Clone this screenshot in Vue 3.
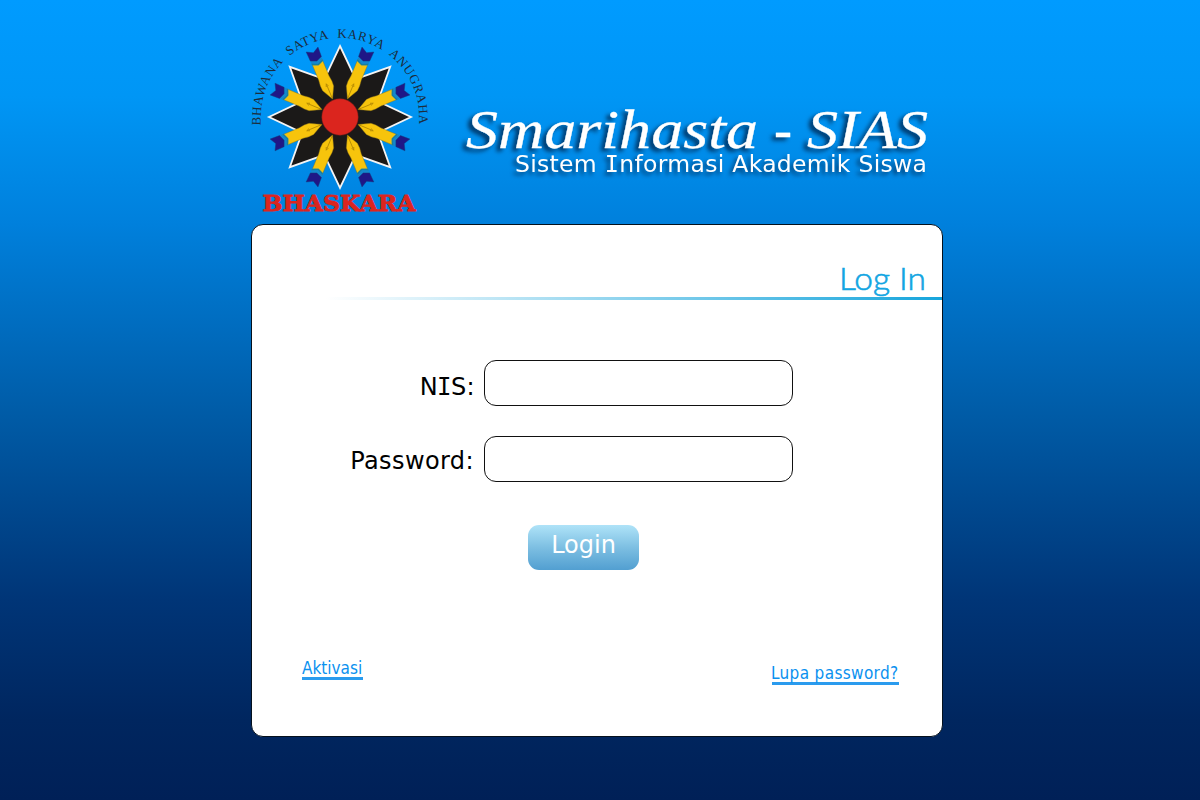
<script setup>
import { ref } from 'vue'

const nis = ref('')
const password = ref('')
const pens = [22.5, 67.5, 112.5, 157.5, 202.5, 247.5, 292.5, 337.5]

const star = Array.from({ length: 16 }, (_, i) => {
  const r = i % 2 ? 41 : 71
  const a = (i * Math.PI) / 8
  return `${(r * Math.sin(a)).toFixed(2)},${(-r * Math.cos(a)).toFixed(2)}`
}).join(' ')
</script>

<template>
  <div class="page">
    <header class="header">
      <svg class="emblem" viewBox="-100 -97 200 205" width="200" height="205">
        <defs>
          <path id="motto-arc" d="M-79.5 8.5 L-79.2 0 A79 79 0 0 1 79.2 0 L79.5 9.5" />
        </defs>
        <text class="motto"><textPath href="#motto-arc" textLength="264" lengthAdjust="spacing">BHAWANA&nbsp; SATYA&nbsp; KARYA&nbsp; ANUGRAHA</textPath></text>
        <polygon class="star" :points="star" />
        <g v-for="angle in pens" :key="angle" :transform="`rotate(${angle})`">
          <path class="barrel" d="M0 -19.5 L-6 -31 Q-6.8 -36 -5.6 -42 L-5.6 -60 L5.6 -60 L5.6 -42 Q6.8 -36 6 -31 Z" />
          <path class="slit" d="M0 -20 L0 -34 M-1.2 -33 L0 -36 L1.2 -33" />
          <path class="band" d="M-5.8 -58.5 L0 -56 L5.8 -58.5 L6 -66 L-6 -66 Z" />
          <path class="band-dark" d="M-5.8 -58.5 L0 -56 L5.8 -58.5 L5.8 -60 L0 -57.5 L-5.8 -60 Z" />
          <path class="tail" d="M-6 -63 L0 -60.5 L6 -63 L6.4 -73 L0 -69.5 L-6.4 -73 Z" />
        </g>
        <circle class="core" r="18.2" />
        <text class="school" x="-77.5" y="94.2" textLength="153" lengthAdjust="spacingAndGlyphs">BHASKARA</text>
      </svg>

      <svg class="titles" viewBox="450 95 490 90" width="490" height="90">
        <g class="title">
          <text x="466" y="148" textLength="292" lengthAdjust="spacingAndGlyphs">Smarihasta</text>
          <text x="774" y="148" textLength="18" lengthAdjust="spacingAndGlyphs">-</text>
          <text x="807" y="148" textLength="121" lengthAdjust="spacingAndGlyphs">SIAS</text>
        </g>
        <text class="subtitle" x="515" y="172" textLength="412">Sistem <tspan class="slab">I</tspan>nformasi Akademik Siswa</text>
      </svg>
    </header>

    <form class="card" @submit.prevent>
      <h1 class="heading">
        <svg width="92" height="36" viewBox="0 0 92 36"><text x="2" y="29" textLength="87" lengthAdjust="spacingAndGlyphs">Log In</text></svg>
      </h1>
      <div class="rule"></div>
      <div class="fields">
        <label class="nis" for="nis">N<span class="slab">I</span>S:</label>
        <input id="nis" v-model="nis" type="text" />
        <label for="password">Password:</label>
        <input id="password" v-model="password" type="password" />
      </div>
      <button class="submit" type="submit">Login</button>
      <nav class="links">
        <a class="link activate">Aktivasi</a>
        <a class="link forgot">Lupa password?</a>
      </nav>
    </form>
  </div>
</template>

<style>
body {
  margin: 0;
}
</style>

<style scoped>
.page {
  box-sizing: border-box;
  width: 1200px;
  height: 800px;
  padding-left: 251px;
  overflow: hidden;
  background: linear-gradient(#009bff 0%, #0096f5 12%, #0080dc 28%, #005ba6 52%, #003577 75%, #00265f 90%, #002057 100%);
  font-family: "DejaVu Sans", Verdana, sans-serif;
}
.header {
  display: flex;
  height: 224px;
}
.emblem {
  flex: none;
  margin: 19.5px 0 0 -11.3px;
}
.titles {
  flex: none;
  margin: 95px 0 0 10.3px;
  overflow: visible;
}
.motto {
  font: 13px "Liberation Serif", serif;
  fill: #1c2c3c;
}
.star {
  fill: #1b1918;
  stroke: #f4f4f4;
  stroke-width: 1.8;
}
.barrel {
  fill: #f7c40c;
  stroke: #8b7416;
  stroke-width: 0.4;
}
.slit {
  fill: none;
  stroke: #9b7400;
  stroke-width: 0.6;
}
.band {
  fill: #1487cf;
}
.band-dark {
  fill: #1a7f9c;
}
.tail {
  fill: #1f1787;
  stroke: #123c78;
  stroke-width: 0.4;
}
.core {
  fill: #db251e;
  stroke: #8a1d16;
  stroke-width: 0.5;
}
.school {
  font: bold 22.5px "DejaVu Serif", serif;
  fill: #db251e;
  stroke: #db251e;
  stroke-width: 0.9;
}
.title {
  font: italic 54px "Liberation Serif", serif;
  fill: #fff;
  stroke: #fff;
  stroke-width: 0.3;
  filter: drop-shadow(-4px 3px 2px rgba(0, 25, 60, 0.75));
}
.subtitle {
  font-size: 23.5px;
  fill: #fff;
  filter: drop-shadow(-3px 3px 2px rgba(0, 25, 60, 0.7));
}
.slab {
  font-family: "DejaVu Sans Mono", monospace;
}
.card {
  box-sizing: border-box;
  display: flex;
  flex-direction: column;
  width: 692px;
  height: 513px;
  border: 1px solid #05111d;
  border-radius: 12px;
  background: #fff;
}
.heading {
  display: flex;
  justify-content: flex-end;
  height: 36px;
  margin: 36px 13px 0 0;
  font: 300 31px/36px Lato, sans-serif;
}
.heading svg {
  overflow: visible;
}
.heading text {
  fill: #12a5e2;
  stroke: #12a5e2;
  stroke-width: 0.6;
}
.rule {
  height: 3px;
  margin: 0 0 60px 74px;
  background: linear-gradient(90deg, #fff, #16a5dc);
}
.fields {
  display: grid;
  grid-template-columns: 222px 309px;
  column-gap: 10px;
  row-gap: 30px;
}
.fields label {
  height: 46px;
  box-sizing: border-box;
  padding-top: 5px;
  font-size: 24px;
  line-height: 41px;
  letter-spacing: 0.4px;
  text-align: right;
}
.fields .nis {
  padding-top: 7px;
  margin-right: -1px;
}
.nis .slab {
  margin: 0 -1px;
}
.fields input {
  box-sizing: border-box;
  width: 309px;
  height: 46px;
  padding: 0 12px;
  border: 1px solid #111;
  border-radius: 12px;
  outline: none;
  background: #fff;
  font: 24px "DejaVu Sans", sans-serif;
}
.submit {
  width: 111px;
  height: 45px;
  margin: 43px 0 0 276px;
  padding: 0 0 5px;
  border: 0;
  border-radius: 11px;
  background: linear-gradient(#afe3f8, #7dbfe2 50%, #529fd1);
  color: #fff;
  font: 24px/40px "DejaVu Sans", sans-serif;
}
.links {
  display: flex;
  justify-content: space-between;
  align-items: flex-start;
  padding: 89px 43px 0 50px;
}
.link {
  height: 18px;
  border-bottom: 3px solid #2a9bee;
  color: #0b91ef;
  font: 17px/19px "DejaVu Sans Condensed", "DejaVu Sans", sans-serif;
  white-space: nowrap;
}
.activate {
  width: 61px;
}
.forgot {
  width: 127px;
  margin-top: 5px;
  letter-spacing: 0.35px;
  text-indent: -1px;
}
</style>
